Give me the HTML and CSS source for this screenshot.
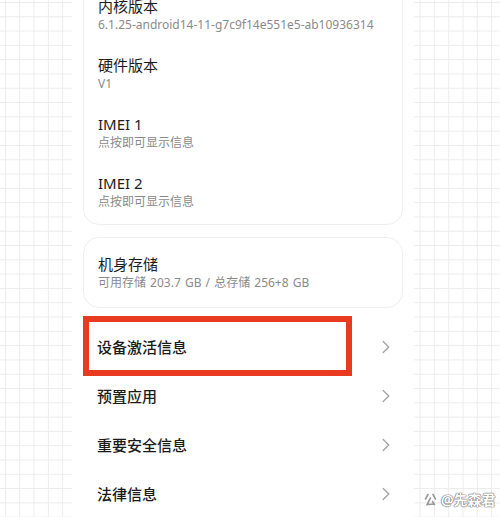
FILE: index.html
```html
<!DOCTYPE html>
<html>
<head>
  <meta charset="utf-8" />
  <title>我的设备</title>
  <link rel="stylesheet" href="styles.css">
</head>
<body>
  <div class="phone">
    <div class="card card-top">
      <div class="item">
        <div class="title">内核版本</div>
        <div class="sub">6.1.25-android14-11-g7c9f14e551e5-ab10936314</div>
      </div>
      <div class="item">
        <div class="title">硬件版本</div>
        <div class="sub">V1</div>
      </div>
      <div class="item">
        <div class="title">IMEI 1</div>
        <div class="sub">点按即可显示信息</div>
      </div>
      <div class="item">
        <div class="title">IMEI 2</div>
        <div class="sub">点按即可显示信息</div>
      </div>
    </div>

    <div class="card">
      <div class="item">
        <div class="title">机身存储</div>
        <div class="sub wide">可用存储 203.7 GB / 总存储 256+8 GB</div>
      </div>
    </div>

    <div class="list">
      <div class="row">
        <span class="row-title">设备激活信息</span>
        <svg class="chev" width="8" height="14" viewBox="0 0 8 14"><polyline points="1.2,1.5 6.8,7 1.2,12.5" /></svg>
        <div class="mark"></div>
      </div>
      <div class="row">
        <span class="row-title">预置应用</span>
        <svg class="chev" width="8" height="14" viewBox="0 0 8 14"><polyline points="1.2,1.5 6.8,7 1.2,12.5" /></svg>
      </div>
      <div class="row">
        <span class="row-title">重要安全信息</span>
        <svg class="chev" width="8" height="14" viewBox="0 0 8 14"><polyline points="1.2,1.5 6.8,7 1.2,12.5" /></svg>
      </div>
      <div class="row">
        <span class="row-title">法律信息</span>
        <svg class="chev" width="8" height="14" viewBox="0 0 8 14"><polyline points="1.2,1.5 6.8,7 1.2,12.5" /></svg>
      </div>
    </div>
  </div>

  <div class="watermark">
    <svg width="13" height="13" viewBox="0 0 13 13"><path d="M4 1.5 L1.5 6 M9 1.5 L11.5 6 M6.5 5 L3 11.5 L10.5 11 M8.5 8.5 L10.5 11.5" /></svg>
    <span>@先森君</span>
  </div>
</body>
</html>
```

FILE: styles.css
```css
html, body {
  margin: 0;
  height: 517px;
  overflow: hidden;
}

body {
  font-family: "Noto Sans", "Noto Sans CJK SC", sans-serif;
  background-color: #fff;
  background-image:
    linear-gradient(#ececec 1px, transparent 1px),
    linear-gradient(90deg, #ececec 1px, transparent 1px);
  background-size: 14.3px 14.3px;
  background-position: 5px 2px;
  position: relative;
}

.phone {
  margin-left: 72px;
  width: 342px;
  height: 517px;
  background: #fff;
  overflow: hidden;
}

.card {
  margin: 0 11px;
  border: 1px solid #efefef;
  border-radius: 16px;
  padding: 5px 0;
  background: #fff;
}

.card-top {
  margin-top: -21px;
  border-top-left-radius: 0;
  border-top-right-radius: 0;
  padding-bottom: 3px;
  margin-bottom: 12px;
}

.item {
  padding: 10.5px 14px;
}

.title {
  font-size: 15px;
  line-height: 20px;
  color: #1c1c1c;
}

.sub {
  font-size: 12px;
  line-height: 18px;
  color: #8a8a8a;
  white-space: nowrap;
}

.sub.wide {
  word-spacing: 1px;
}

.list {
  margin: 14px 11px 0;
}

.row {
  position: relative;
  display: flex;
  align-items: center;
  justify-content: space-between;
  height: 49px;
  padding: 0 13px 0 14px;
}

.row-title {
  font-size: 15px;
  font-weight: 500;
  color: #1a1a1a;
}

.chev polyline {
  fill: none;
  stroke: #a3a3a3;
  stroke-width: 1.3;
  stroke-linecap: round;
  stroke-linejoin: round;
}

.mark {
  position: absolute;
  left: 0;
  top: -6px;
  width: 269px;
  height: 60px;
  border: 6px solid #e83a1e;
  box-sizing: border-box;
}

.watermark {
  position: absolute;
  left: 424px;
  top: 489px;
  display: flex;
  align-items: center;
  gap: 4px;
  font-size: 14px;
  font-weight: 700;
  color: #fff;
  text-shadow: 0 0 1px #777, 0 0 1px #777, 0 0 1px #777, 0 0 1px #777;
}

.watermark path {
  fill: none;
  stroke: #999;
  stroke-width: 1.6;
  stroke-linecap: round;
}
```
